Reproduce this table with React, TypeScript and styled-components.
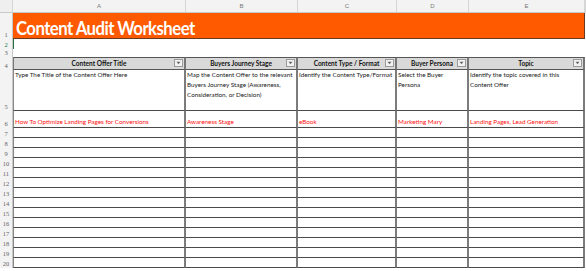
import React from "react";
import styled, { createGlobalStyle, css } from "styled-components";

const Global = createGlobalStyle`
  html, body { margin: 0; padding: 0; background: #ffffff; }
  body { font-family: "Lato", "Liberation Sans", sans-serif; overflow: hidden; }
  * { box-sizing: border-box; }
`;

const Sheet = styled.div`
  display: grid;
  grid-template-columns: 13px 173px 112px 99px 72px 116px 1fr;
  grid-template-rows: 13px 26px 10px 8px 13px 41px 17px repeat(14, 10px);
  width: 586px;
  height: 271px;
  overflow: hidden;
  background: #fff;
`;

const ColHead = styled.div<{ $corner?: boolean }>`
  background: #f3f3f3;
  border-right: 1px solid #d6d6d6;
  border-bottom: 1px solid #c8c8c8;
  color: #777;
  font-family: "Liberation Sans", sans-serif;
  font-size: 6px;
  display: flex;
  align-items: center;
  justify-content: center;
  ${(p) =>
    p.$corner &&
    css`
      background: #efefef;
    `}
`;

const RowHead = styled.div<{ $active?: boolean }>`
  background: #f3f3f3;
  border-right: 1px solid #c8c8c8;
  color: ${(p) => (p.$active ? "#217346" : "#666")};
  font-family: "Liberation Serif", serif;
  font-size: 6.5px;
  display: flex;
  align-items: flex-end;
  justify-content: center;
  padding-bottom: 1px;
`;

const Title = styled.div`
  grid-column: span 5;
  background: #ff5a00;
  border-right: 1px solid #6a3a20;
  border-bottom: 1px solid #6a3a20;
  display: flex;
  align-items: flex-end;
  padding: 0 0 1px 3px;
  white-space: nowrap;
`;

const TitleText = styled.span`
  color: #fff;
  font-family: "Lato", sans-serif;
  font-weight: 700;
  font-size: 19px;
  line-height: 1;
  letter-spacing: -0.6px;
  transform: scaleX(0.88);
  transform-origin: left bottom;
`;

const Blank = styled.div<{ $span?: number; $selected?: boolean }>`
  grid-column: span ${(p) => p.$span ?? 1};
  background: #fff;
  ${(p) =>
    p.$selected &&
    css`
      border-left: 1px solid #217346;
    `}
`;

const HeadCell = styled.div<{ $first?: boolean }>`
  background: #d9d9d9;
  border-top: 1px solid #555;
  border-bottom: 1px solid #555;
  border-right: 2px solid #777;
  ${(p) =>
    p.$first &&
    css`
      border-left: 1px solid #777;
    `}
  font-family: "Lato", sans-serif;
  font-weight: 700;
  font-size: 6.5px;
  color: #111;
  display: flex;
  align-items: center;
  justify-content: center;
  position: relative;
`;

const Filter = styled.span`
  position: absolute;
  right: 1px;
  top: 1px;
  width: 9px;
  height: 8px;
  background: #f2f2f2;
  border: 1px solid #9a9a9a;
  display: flex;
  align-items: center;
  justify-content: center;
`;

const Cell = styled.div<{ $first?: boolean; $red?: boolean; $top?: boolean }>`
  border-bottom: 1px solid #4a4a4a;
  border-right: 2px solid #7c7c7c;
  ${(p) =>
    p.$first &&
    css`
      border-left: 1px solid #888;
    `}
  font-family: "Lato", sans-serif;
  font-size: 6.3px;
  line-height: 10px;
  color: ${(p) => (p.$red ? "#ff1010" : "#1a1a1a")};
  padding: 0 0 0 1px;
  display: flex;
  align-items: ${(p) => (p.$top ? "flex-start" : "flex-end")};
  overflow: hidden;
  white-space: ${(p) => (p.$top ? "normal" : "nowrap")};
`;

const Filler = styled.div`
  background: #fff;
`;

const cols = ["A", "B", "C", "D", "E"];
const headers = ["Content Offer Title", "Buyers Journey Stage", "Content Type / Format", "Buyer Persona", "Topic"];
const guide = [
  "Type The Title of the Content Offer Here",
  "Map the Content Offer to the relevant Buyers Journey Stage (Awareness, Consideration, or Decision)",
  "Identify the Content Type/Format",
  "Select the Buyer Persona",
  "Identify the topic covered in this Content Offer",
];
const example = [
  "How To Optimize Landing Pages for Conversions",
  "Awareness Stage",
  "eBook",
  "Marketing Mary",
  "Landing Pages, Lead Generation",
];

const Arrow = () => (
  <svg width="5" height="4" viewBox="0 0 5 4">
    <path d="M0.5 0.8 H4.5 L2.5 3.3 Z" fill="#666" />
  </svg>
);

export default function App() {
  const emptyRows = Array.from({ length: 14 }, (_, i) => i + 7);
  return (
    <>
      <Global />
      <Sheet>
        <ColHead $corner />
        {cols.map((c) => (
          <ColHead key={c}>{c}</ColHead>
        ))}
        <ColHead />

        <RowHead>1</RowHead>
        <Title>
          <TitleText>Content Audit Worksheet</TitleText>
        </Title>
        <Filler />

        <RowHead $active>2</RowHead>
        <Blank $selected />
        <Blank $span={5} />

        <RowHead>3</RowHead>
        <Blank $span={6} />

        <RowHead>4</RowHead>
        {headers.map((h, i) => (
          <HeadCell key={h} $first={i === 0}>
            {h}
            <Filter>
              <Arrow />
            </Filter>
          </HeadCell>
        ))}
        <Filler />

        <RowHead>5</RowHead>
        {guide.map((g, i) => (
          <Cell key={i} $first={i === 0} $top>
            {g}
          </Cell>
        ))}
        <Filler />

        <RowHead>6</RowHead>
        {example.map((g, i) => (
          <Cell key={i} $first={i === 0} $red>
            {g}
          </Cell>
        ))}
        <Filler />

        {emptyRows.map((r) => (
          <React.Fragment key={r}>
            <RowHead>{r}</RowHead>
            {cols.map((c, i) => (
              <Cell key={c} $first={i === 0} />
            ))}
            <Filler />
          </React.Fragment>
        ))}
      </Sheet>
    </>
  );
}
